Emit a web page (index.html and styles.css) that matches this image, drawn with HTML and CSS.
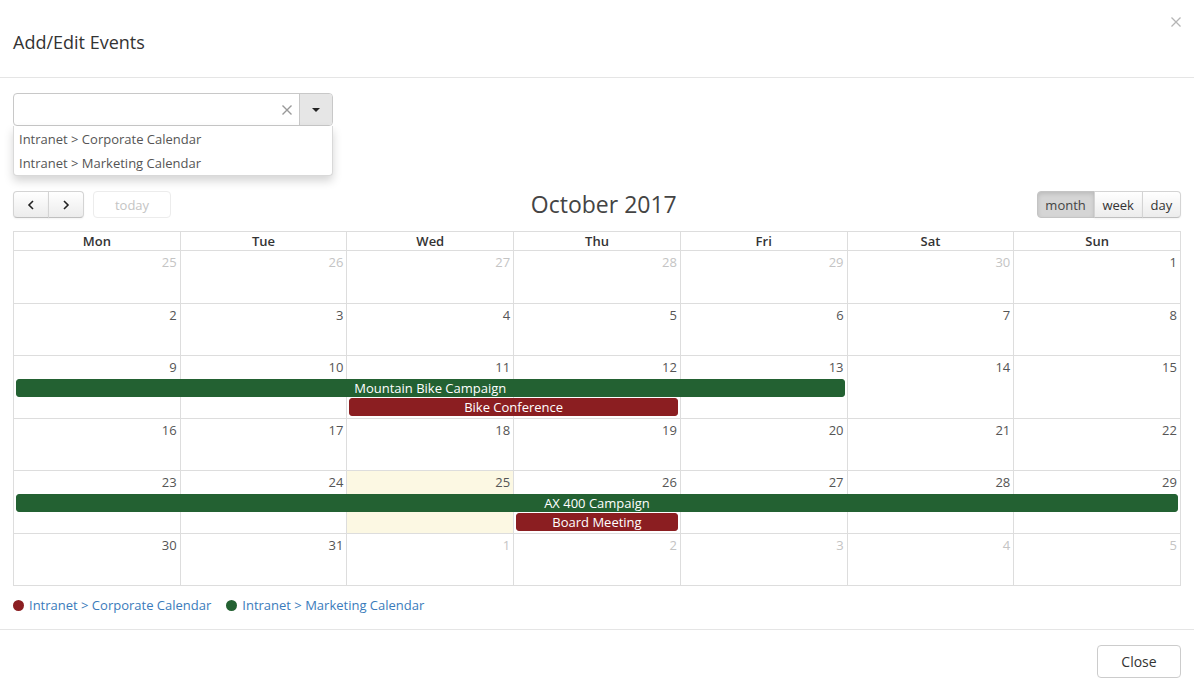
FILE: index.html
```html
<!DOCTYPE html>
<html lang="en">
<head>
<meta charset="utf-8">
<title>Add/Edit Events</title>
<link rel="stylesheet" href="styles.css">
</head>
<body>
<div class="modal">
  <header class="modal-header">
    <h4 class="modal-title">Add/Edit Events</h4>
    <button class="modal-x" aria-label="Close">
      <svg width="10" height="10" viewBox="0 0 10 10"><path d="M0.5 0.5L9.5 9.5M9.5 0.5L0.5 9.5" stroke="#b5b5b5" stroke-width="1.3" fill="none"/></svg>
    </button>
  </header>

  <div class="modal-body">
    <div class="picker">
      <div class="select">
        <span class="select-value"></span>
        <span class="select-clear">
          <svg width="10" height="10" viewBox="0 0 10 10"><path d="M0.5 0.5L9.5 9.5M9.5 0.5L0.5 9.5" stroke="#999" stroke-width="1.4" fill="none"/></svg>
        </span>
        <span class="select-arrow">
          <svg width="8" height="4" viewBox="0 0 8 4"><path d="M0 0H8L4 4Z" fill="#222"/></svg>
        </span>
      </div>
      <ul class="dropdown">
        <li>Intranet &gt; Corporate Calendar</li>
        <li>Intranet &gt; Marketing Calendar</li>
      </ul>
    </div>

    <div class="toolbar">
      <div class="tb-left">
        <div class="btn-group">
          <button class="fc-btn nav-btn"><svg width="8" height="10" viewBox="0 0 8 10"><path d="M6 1L2 5L6 9" stroke="#222" stroke-width="1.6" fill="none"/></svg></button>
          <button class="fc-btn nav-btn"><svg width="8" height="10" viewBox="0 0 8 10"><path d="M2 1L6 5L2 9" stroke="#222" stroke-width="1.6" fill="none"/></svg></button>
        </div>
        <button class="fc-btn today-btn">today</button>
      </div>
      <h2 class="cal-title">October 2017</h2>
      <div class="btn-group">
        <button class="fc-btn active">month</button>
        <button class="fc-btn">week</button>
        <button class="fc-btn">day</button>
      </div>
    </div>

    <div class="cal">
      <div class="cal-head">
        <div class="hd">Mon</div><div class="hd">Tue</div><div class="hd">Wed</div><div class="hd">Thu</div><div class="hd">Fri</div><div class="hd">Sat</div><div class="hd">Sun</div>
      </div>

      <div class="week first">
        <div class="bg c1"></div><div class="bg c2"></div><div class="bg c3"></div><div class="bg c4"></div><div class="bg c5"></div><div class="bg c6"></div><div class="bg c7"></div>
        <div class="num other c1">25</div><div class="num other c2">26</div><div class="num other c3">27</div><div class="num other c4">28</div><div class="num other c5">29</div><div class="num other c6">30</div><div class="num c7">1</div>
      </div>

      <div class="week">
        <div class="bg c1"></div><div class="bg c2"></div><div class="bg c3"></div><div class="bg c4"></div><div class="bg c5"></div><div class="bg c6"></div><div class="bg c7"></div>
        <div class="num c1">2</div><div class="num c2">3</div><div class="num c3">4</div><div class="num c4">5</div><div class="num c5">6</div><div class="num c6">7</div><div class="num c7">8</div>
      </div>

      <div class="week tall">
        <div class="bg c1"></div><div class="bg c2"></div><div class="bg c3"></div><div class="bg c4"></div><div class="bg c5"></div><div class="bg c6"></div><div class="bg c7"></div>
        <div class="num c1">9</div><div class="num c2">10</div><div class="num c3">11</div><div class="num c4">12</div><div class="num c5">13</div><div class="num c6">14</div><div class="num c7">15</div>
        <div class="event green row2 span-1-6">Mountain Bike Campaign</div>
        <div class="event red row3 span-3-5">Bike Conference</div>
      </div>

      <div class="week">
        <div class="bg c1"></div><div class="bg c2"></div><div class="bg c3"></div><div class="bg c4"></div><div class="bg c5"></div><div class="bg c6"></div><div class="bg c7"></div>
        <div class="num c1">16</div><div class="num c2">17</div><div class="num c3">18</div><div class="num c4">19</div><div class="num c5">20</div><div class="num c6">21</div><div class="num c7">22</div>
      </div>

      <div class="week tall">
        <div class="bg c1"></div><div class="bg c2"></div><div class="bg c3 today"></div><div class="bg c4"></div><div class="bg c5"></div><div class="bg c6"></div><div class="bg c7"></div>
        <div class="num c1">23</div><div class="num c2">24</div><div class="num c3">25</div><div class="num c4">26</div><div class="num c5">27</div><div class="num c6">28</div><div class="num c7">29</div>
        <div class="event green row2 span-1-8">AX 400 Campaign</div>
        <div class="event red row3 span-4-5">Board Meeting</div>
      </div>

      <div class="week">
        <div class="bg c1"></div><div class="bg c2"></div><div class="bg c3"></div><div class="bg c4"></div><div class="bg c5"></div><div class="bg c6"></div><div class="bg c7"></div>
        <div class="num c1">30</div><div class="num c2">31</div><div class="num other c3">1</div><div class="num other c4">2</div><div class="num other c5">3</div><div class="num other c6">4</div><div class="num other c7">5</div>
      </div>
    </div>

    <div class="legend">
      <span class="legend-item"><span class="dot red"></span><a href="#">Intranet &gt; Corporate Calendar</a></span>
      <span class="legend-item"><span class="dot green"></span><a href="#">Intranet &gt; Marketing Calendar</a></span>
    </div>
  </div>

  <footer class="modal-footer">
    <button class="btn-close">Close</button>
  </footer>
</div>
</body>
</html>
```

FILE: styles.css
```css
* { box-sizing: border-box; }

html, body {
  margin: 0;
  padding: 0;
  background: #fff;
}

body {
  font-family: "Open Sans", "Liberation Sans", sans-serif;
  font-size: 13px;
  color: #333;
}

button {
  font-family: inherit;
}

.modal {
  width: 1194px;
}

/* header */
.modal-header {
  display: flex;
  justify-content: space-between;
  align-items: flex-start;
  padding: 30px 13px 22px;
  border-bottom: 1px solid #e5e5e5;
}

.modal-title {
  margin: 0;
  font-size: 18px;
  font-weight: 400;
  line-height: 25px;
  color: #333;
}

.modal-x {
  margin-top: -13px;
  padding: 0;
  border: 0;
  background: none;
  width: 10px;
  height: 10px;
  display: flex;
}

/* body */
.modal-body {
  padding: 15px 13px 15px;
}

.picker {
  position: relative;
  width: 320px;
  margin-bottom: 65px;
}

.select {
  display: flex;
  align-items: stretch;
  height: 33px;
  border: 1px solid #c8c8c8;
  border-radius: 4px;
  overflow: hidden;
  background: #fff;
}

.select-value {
  flex: 1;
}

.select-clear {
  display: flex;
  align-items: center;
  padding: 0 7px;
}

.select-arrow {
  display: flex;
  align-items: center;
  justify-content: center;
  width: 33px;
  background: #e6e6e6;
  border-left: 1px solid #c8c8c8;
}

.dropdown {
  position: absolute;
  top: 33px;
  left: 0;
  width: 320px;
  margin: 0;
  padding: 1px 0 0;
  list-style: none;
  background: #fff;
  border: 1px solid #d9d9d9;
  border-top: 0;
  border-radius: 0 0 4px 4px;
  box-shadow: 0 5px 10px rgba(0, 0, 0, 0.17);
  z-index: 2;
}

.dropdown li {
  padding: 0 5px;
  line-height: 24px;
  color: #555;
}

/* toolbar */
.toolbar {
  display: flex;
  justify-content: space-between;
  align-items: center;
  height: 27px;
  margin-bottom: 13px;
}

.tb-left {
  display: flex;
  gap: 10px;
}

.btn-group {
  display: flex;
}

.fc-btn {
  height: 27px;
  padding: 0 7.8px;
  font-size: 13px;
  color: #333;
  background: linear-gradient(#fff, #ececec);
  border: 1px solid #d4d4d4;
  border-bottom-color: #bfbfbf;
  margin-left: -1px;
  box-shadow: 0 1px 2px rgba(0, 0, 0, 0.05);
  display: flex;
  align-items: center;
  justify-content: center;
}

.btn-group .fc-btn:first-child {
  margin-left: 0;
  border-radius: 4px 0 0 4px;
}

.btn-group .fc-btn:last-child {
  border-radius: 0 4px 4px 0;
}

.nav-btn {
  width: 36px;
}

.today-btn {
  width: 78px;
  border-radius: 4px;
  color: #c4c4c4;
  background: #fff;
  border-color: #ececec;
  box-shadow: none;
}

.fc-btn.active {
  background: #d5d5d5;
  box-shadow: inset 0 2px 4px rgba(0, 0, 0, 0.12);
  border-color: #c4c4c4;
  color: #444;
}

.cal-title {
  margin: 0 0 1px;
  font-size: 23px;
  font-weight: 400;
  line-height: 25px;
  color: #444;
}

/* calendar */
.cal {
  border-top: 1px solid #ddd;
  border-left: 1px solid #ddd;
  border-bottom: 1px solid #ddd;
}

.cal-head {
  display: grid;
  grid-template-columns: repeat(7, 1fr);
}

.hd {
  text-align: center;
  font-weight: 600;
  line-height: 18px;
  color: #333;
  border-right: 1px solid #ddd;
}

.week {
  display: grid;
  grid-template-columns: repeat(7, 1fr);
  grid-template-rows: 23px auto auto 1fr;
  border-top: 1px solid #ddd;
  height: 52px;
}

.week.first { height: 53px; }
.week.tall  { height: 63px; }

.bg {
  grid-row: 1 / -1;
  border-right: 1px solid #ddd;
}

.bg.today { background: #fcf8e3; }

.c1 { grid-column: 1; }
.c2 { grid-column: 2; }
.c3 { grid-column: 3; }
.c4 { grid-column: 4; }
.c5 { grid-column: 5; }
.c6 { grid-column: 6; }
.c7 { grid-column: 7; }

.num {
  grid-row: 1;
  text-align: right;
  padding: 2px 4px 0 0;
  line-height: 18px;
  color: #555;
}

.num.other { color: #c4c4c4; }

.event {
  margin: 0 3px 1px 2px;
  height: 18px;
  line-height: 16px;
  border: 1px solid transparent;
  border-radius: 3px;
  color: #fff;
  text-align: center;
  white-space: nowrap;
  overflow: hidden;
}

.event.green { background: #236132; border-color: #236132; }
.event.red   { background: #8b1e21; border-color: #8b1e21; }

.row2 { grid-row: 2; }
.row3 { grid-row: 3; }

.span-1-6 { grid-column: 1 / 6; }
.span-1-8 { grid-column: 1 / 8; }
.span-3-5 { grid-column: 3 / 5; }
.span-4-5 { grid-column: 4 / 5; }

/* legend */
.legend {
  display: flex;
  gap: 15px;
  margin-top: 10px;
  line-height: 18px;
}

.legend-item {
  display: flex;
  align-items: center;
  gap: 5px;
}

.legend-item a {
  color: #3a7bbb;
  text-decoration: none;
}

.dot {
  width: 11px;
  height: 11px;
  border-radius: 50%;
}

.dot.red { background: #8b1e21; }
.dot.green { background: #236132; }

/* footer */
.modal-footer {
  display: flex;
  justify-content: flex-end;
  padding: 15px 13px;
  border-top: 1px solid #e5e5e5;
}

.btn-close {
  width: 84px;
  height: 33px;
  font-size: 14px;
  color: #333;
  background: #fff;
  border: 1px solid #ccc;
  border-radius: 4px;
}
```
